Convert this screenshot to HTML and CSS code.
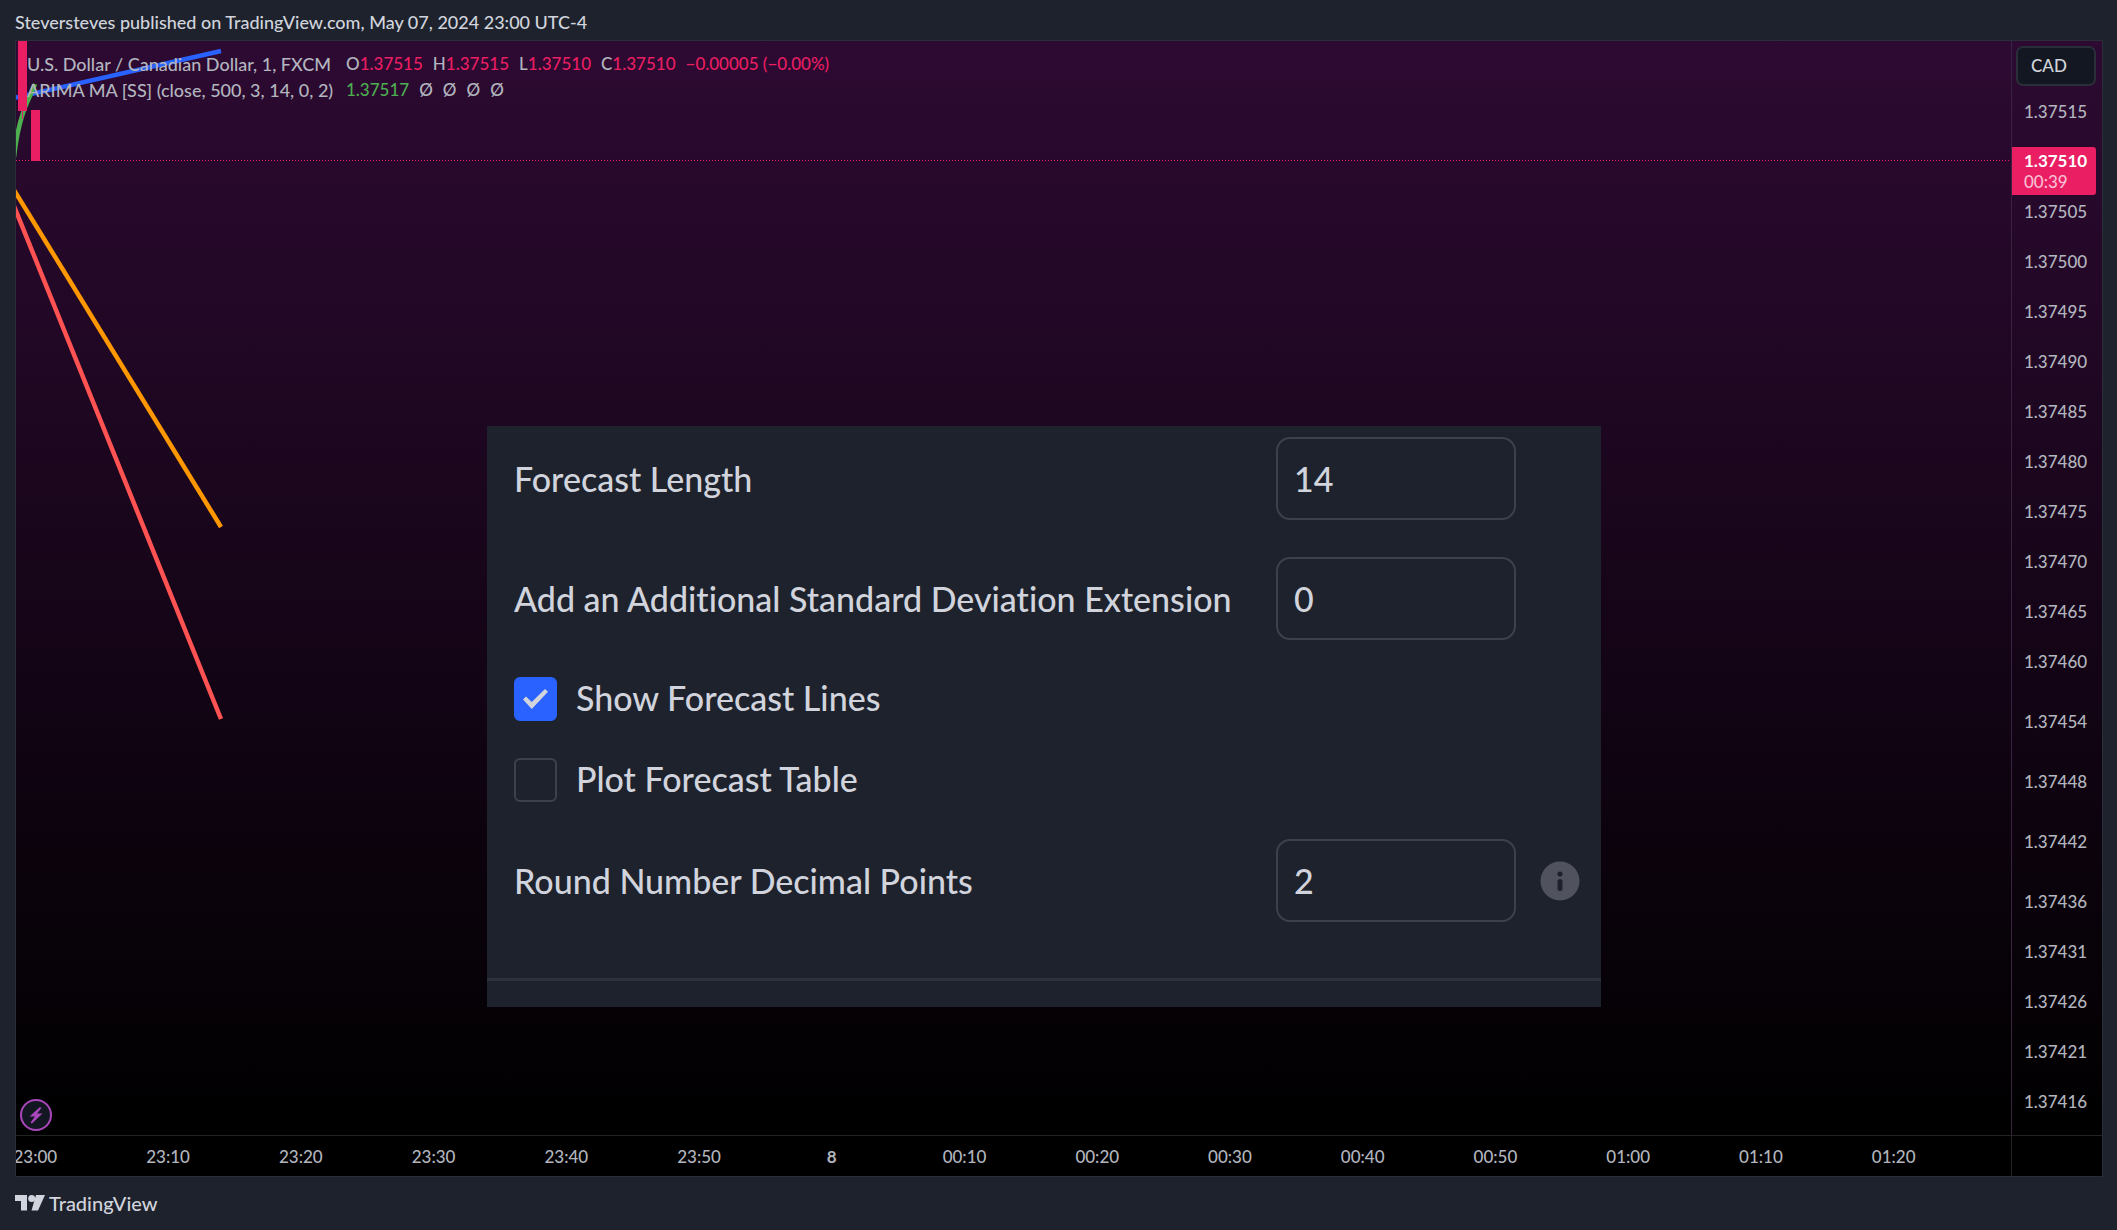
FILE: index.html
```html
<!DOCTYPE html>
<html lang="en">
<head>
<meta charset="utf-8">
<title>USDCAD chart</title>
<link rel="stylesheet" href="styles.css">
</head>
<body>
<header class="caption">Steversteves published on TradingView.com, May 07, 2024 23:00 UTC-4</header>

<main class="chart">
  <section class="plot">
    <svg class="series" aria-hidden="true">
      <path d="M0 119.500H1996" stroke="#e91e63" stroke-width="1" stroke-dasharray="1 2"/>
      <path d="M-2 57L205 10" stroke="#2962ff" stroke-width="4.500"/>
      <path d="M-2 116C0 98 3 84 7 72C10 62 15 54 19 43" stroke="#4caf50" stroke-width="4.500"/>
      <path d="M-2 149L205 486" stroke="#ff9800" stroke-width="4.500"/>
      <path d="M-2 165L205 678" stroke="#ff5252" stroke-width="4.500"/>
      <path d="M2 0h9v70h-4v8h-1v-8h-4zM15 69h9v51h-9z" fill="#e91e63"/>
    </svg>
    <div class="legend">
      <div class="legend-row">
        <span class="title">U.S. Dollar / Canadian Dollar, 1, FXCM</span>
        <span>O<b class="down">1.37515</b></span>
        <span>H<b class="down">1.37515</b></span>
        <span>L<b class="down">1.37510</b></span>
        <span>C<b class="down">1.37510</b></span>
        <span class="down">−0.00005 (−0.00%)</span>
      </div>
      <div class="legend-row">
        <span class="title">ARIMA MA [SS] (close, 500, 3, 14, 0, 2)</span>
        <span class="up">1.37517</span>
        <span>Ø</span><span>Ø</span><span>Ø</span><span>Ø</span>
      </div>
    </div>

    <form class="settings">
      <div class="field">
        <label for="length">Forecast Length</label>
        <input class="box" id="length" type="text" value="14">
      </div>
      <div class="field">
        <label for="deviation">Add an Additional Standard Deviation Extension</label>
        <input class="box" id="deviation" type="text" value="0">
      </div>
      <label class="option"><input class="tick" type="checkbox" checked><span>Show Forecast Lines</span></label>
      <label class="option"><input class="tick" type="checkbox"><span>Plot Forecast Table</span></label>
      <div class="field">
        <label for="decimals">Round Number Decimal Points</label>
        <input class="box" id="decimals" type="text" value="2">
        <svg class="info" viewBox="0 0 40 40" aria-hidden="true">
          <circle cx="20" cy="20" r="19.500" fill="#50535e"/>
          <circle cx="20" cy="13" r="2.600" fill="#1e222d"/>
          <rect x="17.500" y="18" width="5" height="12" rx="2.500" fill="#1e222d"/>
        </svg>
      </div>
      <hr class="rule">
    </form>

    <button class="flash" type="button" aria-label="Go to realtime">
      <svg viewBox="0 0 28 28" aria-hidden="true">
        <path d="M18 6L7.500 15.500H13L8.500 21.500L10 22.500L20.500 12.500H15L19.500 7z" fill="#ab47bc"/>
      </svg>
    </button>
  </section>

  <aside class="prices">
    <button class="currency" type="button">CAD</button>
    <ol class="scale">
      <li>1.37515</li>
      <li class="current"><div class="tag"><strong>1.37510</strong><span>00:39</span></div></li>
      <li>1.37505</li>
      <li>1.37500</li>
      <li>1.37495</li>
      <li>1.37490</li>
      <li>1.37485</li>
      <li>1.37480</li>
      <li>1.37475</li>
      <li>1.37470</li>
      <li>1.37465</li>
      <li>1.37460</li>
      <li class="far">1.37454</li>
      <li class="far">1.37448</li>
      <li class="far">1.37442</li>
      <li class="far">1.37436</li>
      <li>1.37431</li>
      <li>1.37426</li>
      <li>1.37421</li>
      <li>1.37416</li>
    </ol>
  </aside>

  <div class="times">
    <ol>
      <li>23:00</li><li>23:10</li><li>23:20</li><li>23:30</li><li>23:40</li>
      <li>23:50</li><li class="day">8</li><li>00:10</li><li>00:20</li><li>00:30</li>
      <li>00:40</li><li>00:50</li><li>01:00</li><li>01:10</li><li>01:20</li>
    </ol>
  </div>
  <div class="corner"></div>
</main>

<footer class="brand">
  <svg viewBox="0 0 30 16" aria-hidden="true">
    <path d="M0 0H12V15.500H6V6H0z M21 0H30L23 15.500H16.500z" fill="#d1d4dc"/>
    <circle cx="16.700" cy="3.500" r="3.500" fill="#d1d4dc"/>
  </svg>
  <span>TradingView</span>
</footer>
</body>
</html>
```
FILE: styles.css
```css
* {
  box-sizing: border-box;
}

body {
  margin: 0;
  min-height: 100vh;
  display: flex;
  flex-direction: column;
  background: #1e222d;
  color: #b2b5be;
  font-family: "Trebuchet MS", Lato, sans-serif;
  font-size: 17px;
  font-weight: 500;
  font-variant-ligatures: none;
  line-height: 20px;
}

button,
input {
  margin: 0;
  font: inherit;
  color: inherit;
}

ol {
  margin: 0;
  padding: 0;
  list-style: none;
}

.caption {
  padding: 12px 15px 8px;
  color: #d1d4dc;
  font-size: 18px;
}

.chart {
  flex: 1;
  display: grid;
  grid-template-columns: 1fr 91px;
  grid-template-rows: 1fr 41px;
  margin: 0 14px 0 15px;
  border: 1px solid #2a2e39;
  background: #000;
}

.plot {
  position: relative;
  overflow: hidden;
  background: linear-gradient(#2d0a32, #000);
}

.series {
  position: absolute;
  inset: 0;
  width: 100%;
  height: 100%;
  fill: none;
}

.legend {
  position: relative;
  padding: 10px 11px;
}

.legend-row {
  display: flex;
  gap: 10px;
  line-height: 26px;
}

.title {
  min-width: 309px;
  font-size: 18px;
}

.legend b {
  font-weight: 500;
}

.legend .down {
  color: #e91e63;
}

.up {
  color: #4caf50;
}

.settings {
  position: absolute;
  top: 385px;
  left: 471px;
  width: 1114px;
  display: flex;
  flex-direction: column;
  gap: 37px;
  padding: 11px 0 25px;
  background: #1e222d;
  color: #d1d4dc;
  font-size: 34px;
  line-height: 40px;
}

.field {
  display: flex;
  align-items: center;
  padding: 0 21px 0 27px;
}

.field label {
  width: 762px;
}

.box {
  width: 240px;
  height: 83px;
  padding: 0 16px;
  border: 2px solid #3e404b;
  border-radius: 14px;
  background: transparent;
}

.info {
  width: 40px;
  height: 40px;
  margin-left: 24px;
}

.option {
  display: flex;
  align-items: center;
  gap: 19px;
  padding-left: 27px;
}

.option span {
  height: 42px;
}

.tick {
  appearance: none;
  width: 43px;
  height: 44px;
  border: 2px solid #3e404b;
  border-radius: 6px;
}

.tick:checked {
  display: grid;
  place-items: center;
  border-color: #2962ff;
  background: #2962ff;
}

.tick:checked::before {
  content: "";
  width: 25px;
  height: 20px;
  background: #d1d4dc;
  clip-path: polygon(0 52%, 12% 38%, 35% 65%, 88% 0, 100% 14%, 35% 100%);
}

.rule {
  width: 100%;
  height: 3px;
  margin: 19px 0 1px;
  border: 0;
  background: #2f323d;
}

.flash {
  position: absolute;
  left: 4px;
  bottom: 4px;
  width: 32px;
  height: 32px;
  padding: 0;
  border: 2px solid #ab47bc;
  border-radius: 50%;
  background: #131722;
}

.flash svg {
  display: block;
}

.prices {
  border-left: 1px solid #392340;
  background: linear-gradient(#2d0a32, #000);
}

.currency {
  display: block;
  width: 80px;
  height: 40px;
  margin: 5px 0 1px 4px;
  padding: 0 13px;
  border: 2px solid #2a2e39;
  border-radius: 7px;
  background: #131722;
  color: #d1d4dc;
  text-align: left;
}

.scale li {
  height: 50px;
  padding-left: 12px;
  line-height: 50px;
}

.scale .far {
  margin-top: 10px;
}

.scale .current {
  padding: 10px 6px 0 0;
}

.tag {
  display: flex;
  flex-direction: column;
  height: 48px;
  padding: 3px 12px;
  border-radius: 0 3px 3px 0;
  background: #e91e63;
  color: #fff;
  line-height: 21px;
}

.tag span {
  color: #fbbfd3;
}

.times {
  overflow: hidden;
  border-top: 1px solid #222;
}

.times ol {
  display: flex;
  margin: 0 51px 0 -47px;
}

.times li {
  flex: 1;
  text-align: center;
  line-height: 42px;
}

.times .day {
  font-weight: 700;
}

.corner {
  border-top: 1px solid #222;
  border-left: 1px solid #222;
}

.brand {
  display: flex;
  align-items: center;
  gap: 4px;
  padding: 14px 15px 15px;
  color: #d1d4dc;
  font-size: 20px;
  line-height: 24px;
}

.brand svg {
  width: 30px;
  height: 16px;
}
```
